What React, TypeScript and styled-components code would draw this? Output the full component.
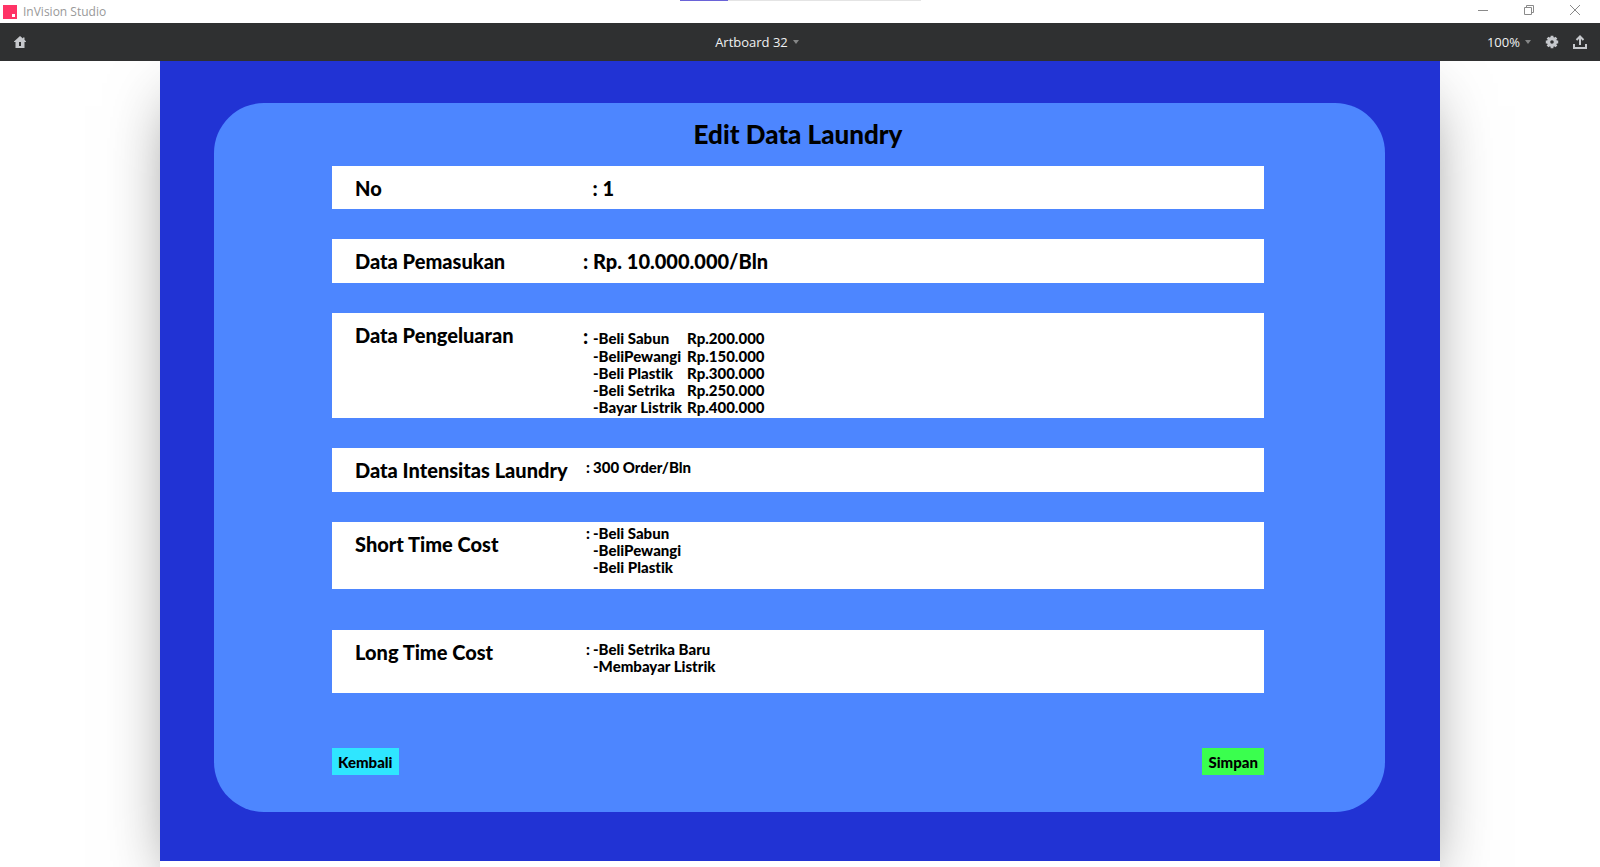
import React from "react";
import styled, { createGlobalStyle } from "styled-components";

const display = `"Berlin Sans FB Demi", Lato, "Liberation Sans", sans-serif`;
const system = `"Segoe UI", "Open Sans", "Liberation Sans", sans-serif`;

const GlobalStyle = createGlobalStyle`
  *, *::before, *::after { box-sizing: border-box; }
  body { margin: 0; background: #ffffff; font-family: ${system}; }
  h1, dl, dt, dd, ul { margin: 0; padding: 0; }
  ul { list-style: none; }
  button { border: 0; margin: 0; padding: 0; background: none; font: inherit; color: inherit; cursor: pointer; }
  svg { display: block; }
`;

const Window = styled.div`
  display: flex;
  flex-direction: column;
  min-height: 100vh;
  overflow: hidden;
`;

const TitleBar = styled.header`
  position: relative;
  z-index: 1;
  display: flex;
  align-items: center;
  justify-content: space-between;
  height: 23px;
  padding: 0 19px 0 3px;
  background: #ffffff;
`;

const AppName = styled.div`
  display: flex;
  align-items: center;
  gap: 6px;
  color: #999999;
  font-size: 12px;
  line-height: 22px;
`;

const LoadTrack = styled.div`
  position: absolute;
  top: 0;
  left: 680px;
  width: 241px;
  height: 1px;
  background: #e4e4e4;
`;

const LoadFill = styled.div`
  width: 20%;
  height: 1px;
  background: #6a63d8;
`;

const WindowControls = styled.div`
  display: flex;
  gap: 34px;
  padding-bottom: 3px;
  color: #8a8a8a;
`;

const Toolbar = styled.nav`
  position: relative;
  z-index: 1;
  display: flex;
  align-items: center;
  justify-content: space-between;
  height: 38px;
  padding: 0 13px;
  background: #2f3031;
  color: #f0f1f2;
  font-size: 13px;
`;

const ToolButton = styled.button`
  display: flex;
  align-items: center;
  gap: 5px;
  line-height: 20px;
`;

const ToolGroup = styled.div`
  display: flex;
  align-items: center;
  gap: 14px;
`;

const Caret = styled.span`
  border: 3px solid transparent;
  border-top: 4px solid #858687;
  border-bottom: 0;
`;

const Stage = styled.main`
  flex: 1;
  padding: 0 10%;
`;

const Sheet = styled.div`
  padding-bottom: 6px;
  background: #ffffff;
  box-shadow: 0 25px 64px -20px rgba(0, 0, 0, 0.6);
`;

const Artboard = styled.div`
  padding: 42px 55px 49px 54px;
  background: #2133d4;
`;

const Panel = styled.section`
  padding: 16px 121px 37px 118px;
  border-radius: 50px;
  background: #4d86ff;
  color: #000000;
  font-family: ${display};
  font-weight: 900;
  font-variant-ligatures: none;
`;

const Heading = styled.h1`
  font-size: 26px;
  font-weight: 900;
  line-height: 30px;
  text-align: center;
`;

const Fields = styled.dl`
  display: flex;
  flex-direction: column;
  gap: 30px;
  margin-top: 17px;
`;

const Field = styled.div<{ $height: number; $top: number }>`
  display: grid;
  grid-template-columns: 228px 1fr;
  align-items: start;
  min-height: ${(p) => p.$height}px;
  padding-left: 23px;
  background: #ffffff;

  dd {
    padding-top: ${(p) => p.$top}px;
  }

  &:last-child {
    margin-top: 11px;
  }
`;

const Label = styled.dt`
  padding-top: 10px;
  font-size: 20px;
  line-height: 24px;
`;

const Value = styled.dd<{ $large?: boolean }>`
  display: flex;
  font-size: ${(p) => (p.$large ? 20 : 15)}px;
  line-height: ${(p) => (p.$large ? 24 : 17)}px;
  white-space: pre;
`;

const Colon = styled.span`
  width: 10px;
`;

const SmallColon = styled(Colon)`
  text-align: center;
`;

const LargeColon = styled(Colon)`
  font-size: 20px;
`;

const Expense = styled.li`
  display: grid;
  grid-template-columns: 94px auto;

  &:first-child {
    line-height: 20px;
  }
`;

const Actions = styled.div`
  display: flex;
  justify-content: space-between;
  margin-top: 55px;
`;

const Action = styled.button<{ $color: string }>`
  height: 27px;
  padding: 2px 6px 0;
  background: ${(p) => p.$color};
  font-size: 15px;
  line-height: 17px;
`;

const expenses = [
  ["-Beli Sabun", "Rp.200.000"],
  ["-BeliPewangi", "Rp.150.000"],
  ["-Beli Plastik", "Rp.300.000"],
  ["-Beli Setrika", "Rp.250.000"],
  ["-Bayar Listrik", "Rp.400.000"],
];

const Lines = ({ items }: { items: string[] }) => (
  <ul>
    {items.map((item) => (
      <li key={item}>{item}</li>
    ))}
  </ul>
);

const GearIcon = () => (
  <svg width="14" height="14" viewBox="0 0 14 14" aria-hidden="true">
    <g fill="#c6c8cc">
      {[0, 45, 90, 135].map((angle) => (
        <path key={angle} d="M5.600 .8h2.800v2.400H5.600zM5.600 10.800h2.800v2.400H5.600z" transform={`rotate(${angle} 7 7)`} />
      ))}
    </g>
    <circle cx="7" cy="7" r="3.400" fill="none" stroke="#c6c8cc" strokeWidth="3.200" />
  </svg>
);

export default function App() {
  return (
    <Window>
      <GlobalStyle />
      <TitleBar>
        <AppName>
          <svg width="14" height="14" viewBox="0 0 14 14" aria-hidden="true">
            <rect width="14" height="14" fill="#ff3366" />
            <rect x="9" y="9" width="3" height="3" fill="#fff" />
          </svg>
          InVision Studio
        </AppName>
        <LoadTrack>
          <LoadFill />
        </LoadTrack>
        <WindowControls>
          <button aria-label="Minimize">
            <svg width="12" height="12" viewBox="0 0 12 12" stroke="currentColor" fill="none">
              <path d="M1 6.5h10" />
            </svg>
          </button>
          <button aria-label="Restore">
            <svg width="12" height="12" viewBox="0 0 12 12" stroke="currentColor" fill="none">
              <path d="M1.500 3.500h7v7h-7zM3.500 3.500v-2h7v7h-2" />
            </svg>
          </button>
          <button aria-label="Close">
            <svg width="12" height="12" viewBox="0 0 12 12" stroke="currentColor" fill="none">
              <path d="M1 1l10 10M11 1L1 11" />
            </svg>
          </button>
        </WindowControls>
      </TitleBar>
      <Toolbar>
        <ToolButton aria-label="Home">
          <svg width="14" height="12" viewBox="0 0 14 12" fill="#c6c8cc">
            <path fillRule="evenodd" d="M7 0l3 2.500V1.500h1.500v2.300L13 5.500V6h-1.500v6h-9V6H1v-.5zM6 6v4h2V6z" />
          </svg>
        </ToolButton>
        <ToolButton>
          Artboard 32
          <Caret />
        </ToolButton>
        <ToolGroup>
          <ToolButton>
            100%
            <Caret />
          </ToolButton>
          <ToolButton aria-label="Settings">
            <GearIcon />
          </ToolButton>
          <ToolButton aria-label="Share">
            <svg width="14" height="14" viewBox="0 0 14 14" fill="none" stroke="#c6c8cc" strokeWidth="2">
              <path d="M1 9v4h12V9M7 10V2M3.500 5L7 1.500L10.500 5" />
            </svg>
          </ToolButton>
        </ToolGroup>
      </Toolbar>
      <Stage>
        <Sheet>
          <Artboard>
            <Panel>
              <Heading>Edit Data Laundry</Heading>
              <Fields>
                <Field $height={43} $top={10}>
                  <Label>No</Label>
                  <Value $large>{"  : 1"}</Value>
                </Field>
                <Field $height={44} $top={10}>
                  <Label>Data Pemasukan</Label>
                  <Value $large>
                    <Colon>:</Colon>Rp. 10.000.000/Bln
                  </Value>
                </Field>
                <Field $height={105} $top={15}>
                  <Label>Data Pengeluaran</Label>
                  <Value>
                    <LargeColon>:</LargeColon>
                    <ul>
                      {expenses.map(([name, amount]) => (
                        <Expense key={name}>
                          <span>{name}</span>
                          <span>{amount}</span>
                        </Expense>
                      ))}
                    </ul>
                  </Value>
                </Field>
                <Field $height={44} $top={11}>
                  <Label>Data Intensitas Laundry</Label>
                  <Value>
                    <SmallColon>:</SmallColon>300 Order/Bln
                  </Value>
                </Field>
                <Field $height={67} $top={3}>
                  <Label>Short Time Cost</Label>
                  <Value>
                    <SmallColon>:</SmallColon>
                    <Lines items={["-Beli Sabun", "-BeliPewangi", "-Beli Plastik"]} />
                  </Value>
                </Field>
                <Field $height={63} $top={11}>
                  <Label>Long Time Cost</Label>
                  <Value>
                    <SmallColon>:</SmallColon>
                    <Lines items={["-Beli Setrika Baru", "-Membayar Listrik"]} />
                  </Value>
                </Field>
              </Fields>
              <Actions>
                <Action $color="#2fe6ff">Kembali</Action>
                <Action $color="#3aff4e">Simpan</Action>
              </Actions>
            </Panel>
          </Artboard>
        </Sheet>
      </Stage>
    </Window>
  );
}
